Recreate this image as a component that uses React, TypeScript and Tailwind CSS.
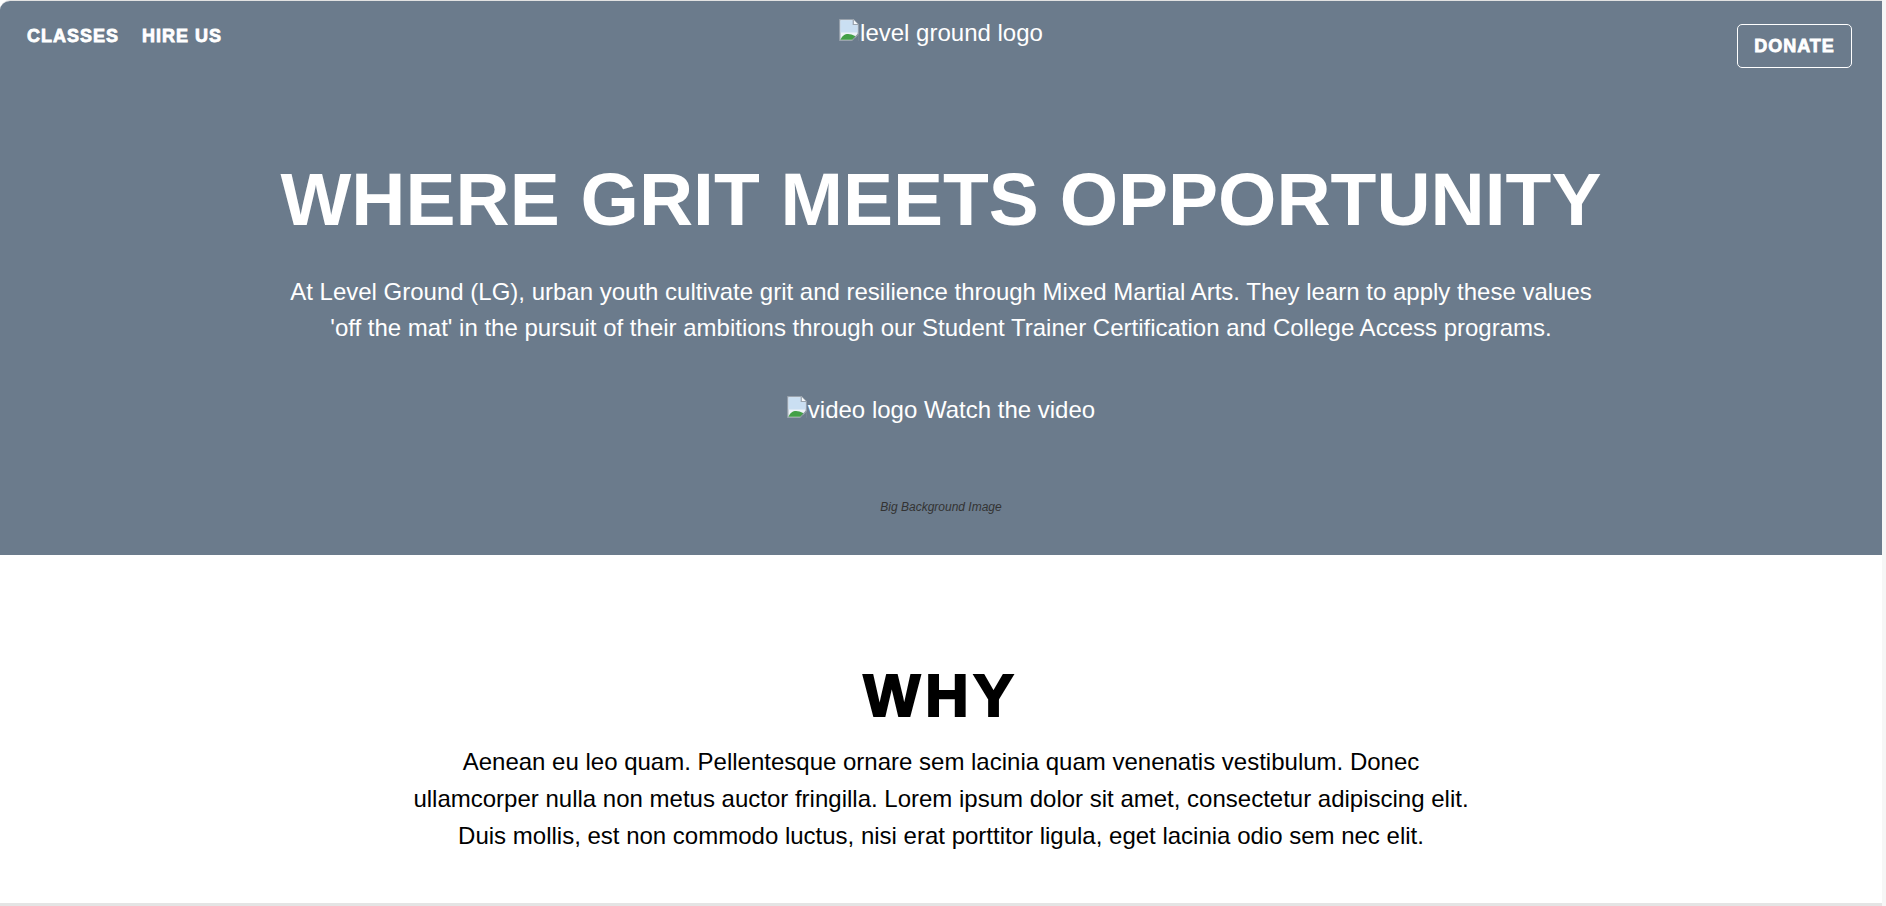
import React from 'react';

function BrokenImage() {
  return (
    <svg width="20" height="22" viewBox="0 0 16 18" className="shrink-0">
      <path d="M0.5 0.5h11l4 4v13h-15z" fill="#eef3f8" stroke="#9aa3ad" />
      <path d="M1 1h10.3v3.9h3.7V11H1z" fill="#cadff2" />
      <path d="M11.5 0.5v4h4" fill="#f7f9fb" stroke="#9aa3ad" />
      <path d="M1 17 C3 11.5 8 11 13 14 L13 17 Z" fill="#43a047" />
      <path d="M10.5 18 L16 12.5 L16 18 Z" fill="#6b7b8c" />
      <path d="M10.5 17.5 L15.5 12.5" stroke="#8a949e" strokeWidth="1" />
    </svg>
  );
}

function Header() {
  return (
    <div className="grid grid-cols-[1fr_auto_1fr] items-start px-[27px]">
      <nav className="flex gap-[23px] mt-[26px] text-[18px] leading-[18px] font-bold tracking-[1px] text-white [-webkit-text-stroke:0.8px_white]">
        <a href="#">CLASSES</a>
        <a href="#">HIRE US</a>
      </nav>
      <div className="flex items-baseline gap-px mt-[18px] text-[24px] leading-[28px] text-white">
        <BrokenImage />
        <span>level ground logo</span>
      </div>
      <div className="flex justify-end pr-[3px]">
        <button className="mt-[23px] w-[115px] h-[44px] flex items-center justify-center border border-white rounded-[5px] text-[18px] font-bold tracking-[1px] text-white [-webkit-text-stroke:0.8px_white]">
          DONATE
        </button>
      </div>
    </div>
  );
}

function Hero() {
  return (
    <section className="bg-[#6b7b8c] h-[554px] flex flex-col items-center text-white">
      <div className="w-full">
        <Header />
      </div>
      <h1 className="mt-[94px] text-[75px] leading-none font-bold">
        WHERE GRIT MEETS OPPORTUNITY
      </h1>
      <p className="mt-[37px] max-w-[1320px] text-center text-[24px] leading-[36px]">
        At Level Ground (LG), urban youth cultivate grit and resilience through Mixed Martial Arts. They learn to apply these values 'off the mat' in the pursuit of their ambitions through our Student Trainer Certification and College Access programs.
      </p>
      <a href="#" className="mt-[50px] flex items-baseline gap-px text-[24px] leading-[28px]">
        <BrokenImage />
        <span>video logo Watch the video</span>
      </a>
      <p className="mt-[76px] text-[12px] leading-[14px] italic text-[#333333]">Big Background Image</p>
    </section>
  );
}

function Why() {
  return (
    <section className="flex flex-col items-center text-black">
      <h2 className="mt-[111px] text-[60px] leading-none font-bold tracking-[5px] [-webkit-text-stroke:2.2px_black]">
        WHY
      </h2>
      <p className="mt-[17px] max-w-[1070px] text-center text-[24px] leading-[37px]">
        Aenean eu leo quam. Pellentesque ornare sem lacinia quam venenatis vestibulum. Donec ullamcorper nulla non metus auctor fringilla. Lorem ipsum dolor sit amet, consectetur adipiscing elit. Duis mollis, est non commodo luctus, nisi erat porttitor ligula, eget lacinia odio sem nec elit.
      </p>
    </section>
  );
}

export default function App() {
  return (
    <div className="h-[906px] flex bg-white font-['Liberation_Sans',Arial,sans-serif] overflow-hidden">
      <main className="flex-1 flex flex-col rounded-tl-[10px] overflow-hidden border-t border-[#e2e2e2] border-b-[3px] border-b-[#e4e4e4]">
        <Hero />
        <Why />
      </main>
      <div className="w-[4px] bg-[#f6f6f6]" />
    </div>
  );
}
